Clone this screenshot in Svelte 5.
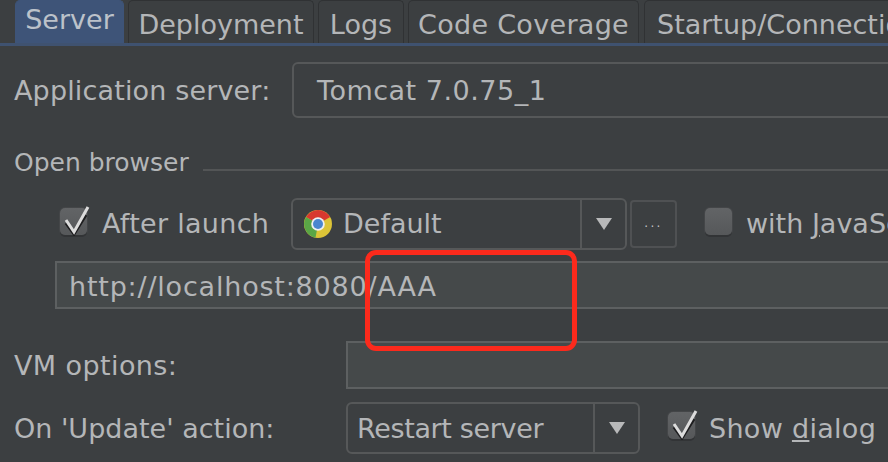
<script>
  const tabs = ['Server', 'Deployment', 'Logs', 'Code Coverage', 'Startup/Connection'];
</script>

<div class="page">
  <nav class="tabs">
    {#each tabs as tab, i}
      <div class="tab" class:tab--active={i === 0}>{tab}</div>
    {/each}
  </nav>

  <div class="row row--server">
    <span class="label label--server">Application server:</span>
    <div class="combo combo--wide"><span class="combo__text">Tomcat 7.0.75_1</span></div>
  </div>

  <div class="group-title">
    <span>Open browser</span>
    <i class="group-title__line"></i>
  </div>

  <div class="row row--launch">
    <span class="check check--on">
      <svg viewBox="0 0 32 32" width="32" height="32">
        <path d="M6 19l8 11L26 11" fill="none" stroke="#1d1d1f" stroke-width="3" />
        <path d="M6 16l8 12L28 3" fill="none" stroke="#dcdcdc" stroke-width="3" />
      </svg>
    </span>
    <span class="label label--after">After launch</span>
    <div class="combo combo--browser">
      <svg class="chrome" viewBox="0 0 28 28" width="28" height="28">
        <circle cx="14" cy="14" r="14" fill="#dcc437" />
        <path d="M14 14L2 7a14 14 0 0 1 24.2 0z" fill="#d8382f" />
        <path d="M14 14L2 7a14 14 0 0 0 9.5 20.8z" fill="#5aa646" />
        <circle cx="14" cy="14" r="6.8" fill="#eef0f0" />
        <circle cx="14" cy="14" r="5" fill="#4a86cf" />
      </svg>
      <span class="combo__value">Default</span>
      <span class="combo__arrow"><i class="arrow"></i></span>
    </div>
    <div class="dots">...</div>
    <span class="check"></span>
    <span class="label label--js">with <u>J</u>avaScript debugger</span>
  </div>

  <div class="field field--url">http://localhost:8080/AAA</div>

  <div class="row row--vm">
    <span class="label label--vm">VM options:</span>
    <div class="field field--vm"></div>
  </div>

  <div class="row row--update">
    <span class="label label--update">On 'Update' action:</span>
    <div class="combo combo--update">
      <span class="combo__value">Restart server</span>
      <span class="combo__arrow"><i class="arrow"></i></span>
    </div>
    <span class="check check--on check--dialog">
      <svg viewBox="0 0 32 32" width="32" height="32">
        <path d="M6 19l8 11L26 11" fill="none" stroke="#1d1d1f" stroke-width="3" />
        <path d="M6 16l8 12L28 3" fill="none" stroke="#dcdcdc" stroke-width="3" />
      </svg>
    </span>
    <span class="label label--dialog">Show <u>d</u>ialog</span>
  </div>

  <div class="callout"></div>
</div>

<style>
  :global(body) {
    margin: 0;
    background: #3c3f41;
  }

  .page {
    background: #3c3f41;
    color: #b4b6b8;
    font-family: "DejaVu Sans", "Noto Sans", sans-serif;
    font-size: 27px;
    line-height: 30px;
    height: 462px;
    overflow: hidden;
    position: relative;
    width: 888px;
  }

  .tabs {
    border-bottom: 3px solid #3f5270;
    box-sizing: border-box;
    display: flex;
    gap: 4px;
    height: 46px;
    padding-left: 15px;
    white-space: nowrap;
  }

  .tab {
    background: #3c3f41;
    border: 1px solid #303234;
    border-bottom: 0;
    border-radius: 5px 5px 0 0;
    box-sizing: border-box;
    flex: none;
    height: 43px;
    line-height: 47px;
    text-align: center;
  }

  .tab:nth-child(1) { width: 109px; }
  .tab:nth-child(2) { width: 186px; }
  .tab:nth-child(3) { width: 86px; }
  .tab:nth-child(4) { width: 231px; margin-right: 1px; letter-spacing: 0.3px; }
  .tab:nth-child(5) { width: 280px; text-align: left; padding-left: 12px; }

  .tab--active {
    background: #3e5478;
    border-color: #3e5478;
    line-height: 37px;
    color: #bcc2ca;
  }

  .row {
    align-items: center;
    display: flex;
    white-space: nowrap;
  }

  .label { flex: none; }

  .row--server {
    height: 56px;
    margin-top: 16px;
    padding-left: 14px;
  }

  .label--server { width: 278px; letter-spacing: 0.15px; padding-top: 2px; }

  .combo {
    border: 2px solid #565859;
    border-radius: 6px;
    box-sizing: border-box;
    display: flex;
    align-items: center;
    flex: none;
  }

  .combo--wide {
    height: 56px;
    letter-spacing: 0.5px;
    padding-left: 23px;
    padding-top: 2px;
    width: 640px;
  }

  .group-title {
    align-items: center;
    display: flex;
    font-size: 25px;
    margin-top: 30px;
    padding-left: 14px;
  }

  .group-title__line {
    background: #535556;
    flex: 1;
    height: 2px;
    margin: 14px 0 0 14px;
  }

  .row--launch {
    height: 52px;
    margin-top: 20px;
    padding-left: 60px;
  }

  .check {
    background: linear-gradient(#626466, #56585a);
    border-radius: 5px;
    box-shadow: 0 2px 0 #323436, 0 0 0 1px #444648;
    flex: none;
    height: 27px;
    margin-bottom: 5px;
    position: relative;
    width: 27px;
  }

  .check svg {
    left: 0;
    position: absolute;
    top: -4px;
  }

  .label--after { margin-left: 15px; width: 189px; letter-spacing: 0.3px; }

  .combo--browser {
    height: 52px;
    padding-left: 11px;
    width: 336px;
  }

  .chrome { flex: none; }

  .combo__value { flex: 1; margin-left: 11px; }

  .combo__arrow {
    align-items: center;
    align-self: stretch;
    border-left: 2px solid #565859;
    display: flex;
    justify-content: center;
    width: 43px;
  }

  .arrow {
    border-left: 8px solid transparent;
    border-right: 8px solid transparent;
    border-top: 12px solid #b8b9ba;
    height: 0;
    width: 0;
  }

  .dots {
    align-items: center;
    border: 2px solid #4f5153;
    border-radius: 4px;
    box-sizing: border-box;
    color: #c4c5c6;
    display: flex;
    flex: none;
    font-size: 12px;
    height: 48px;
    justify-content: center;
    letter-spacing: 2.4px;
    margin-left: 3px;
    padding-bottom: 2px;
    width: 47px;
  }

  .dots + .check { margin-left: 28px; }

  .label--js { margin-left: 14px; }

  .field {
    background: #45494a;
    border: 2px solid #5d6061;
    box-sizing: border-box;
    height: 48px;
  }

  .field--url {
    letter-spacing: 0.8px;
    line-height: 48px;
    margin: 11px 0 0 55px;
    padding-left: 12px;
    width: 860px;
  }

  .row--vm {
    margin-top: 32px;
    padding-left: 14px;
  }

  .label--vm { width: 332px; letter-spacing: 0.4px; padding-top: 2px; }

  .field--vm {
    flex: none;
    width: 560px;
  }

  .row--update {
    height: 52px;
    margin-top: 13px;
    padding-left: 14px;
  }

  .label--update { width: 332px; padding-top: 2px; }

  .combo--update {
    height: 52px;
    width: 294px;
  }

  .combo--update .combo__value { margin-left: 9px; letter-spacing: -0.35px; padding-top: 2px; }

  .check--dialog { margin-left: 28px; }

  .label--dialog { margin-left: 14px; letter-spacing: 0.3px; padding-top: 2px; }

  /* annotation drawn over the screenshot */
  .callout {
    border: 5px solid #fc2a1c;
    border-radius: 11px;
    box-sizing: border-box;
    height: 101px;
    left: 365px;
    position: absolute;
    top: 250px;
    width: 212px;
  }
</style>
